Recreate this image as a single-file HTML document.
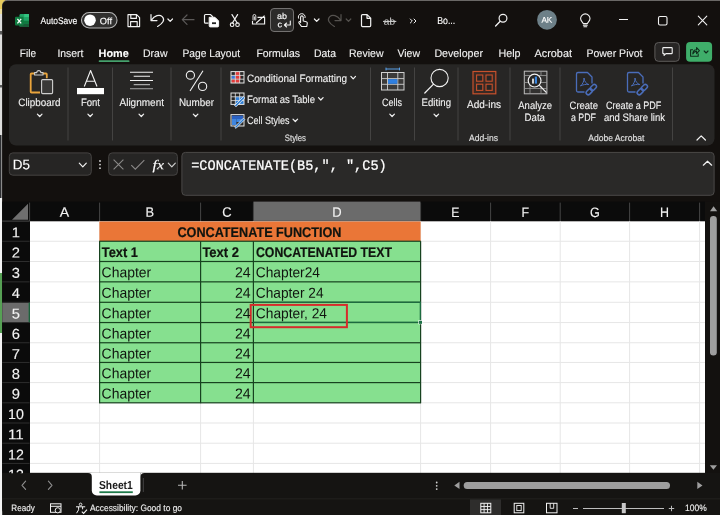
<!DOCTYPE html>
<html><head><meta charset="utf-8"><title>Excel</title>
<style>
*{box-sizing:border-box;margin:0;padding:0}
html,body{width:720px;height:515px;overflow:hidden;background:#13100e;font-family:"Liberation Sans",sans-serif}
#app{position:absolute;left:0;top:0;width:720px;height:515px;overflow:hidden;background:#e6e3df}
.a{position:absolute}
.x{position:absolute;white-space:nowrap;transform-origin:0 0}
svg{position:absolute;left:0;top:0}
</style></head><body><div id="app">
<svg width="720" height="515" viewBox="0 0 720 515">
<rect x="0.00" y="0.00" width="6.00" height="14.00" fill="#e6ca5c"/>
<rect x="0.00" y="9.00" width="3.00" height="8.00" fill="#ecdc9c"/>
<rect x="0.00" y="14.00" width="3.00" height="121.00" fill="#dedddc"/>
<rect x="0.00" y="31.00" width="2.00" height="3.50" fill="#5a5a5a"/>
<rect x="0.00" y="85.00" width="2.00" height="2.50" fill="#5a5a5a"/>
<rect x="0.00" y="135.00" width="3.00" height="63.00" fill="#17181c"/>
<rect x="0.80" y="135.00" width="1.20" height="63.00" fill="#8a8a8a"/>
<rect x="0.00" y="198.00" width="3.00" height="75.00" fill="#f4f4f4"/>
<rect x="0.00" y="273.00" width="3.00" height="60.00" fill="#56a054"/>
<rect x="0.00" y="333.00" width="3.00" height="182.00" fill="#f4f4f4"/>
<path d="M7.2 0 H722.2 A0 0 0 0 1 722.2 0 V515 A0 0 0 0 1 722.2 515 H8.2 A6 6 0 0 1 2.2 509 V5 A5 5 0 0 1 7.2 0z" fill="#6a6866"/>
<path d="M7.2 1 H722.2 A0 0 0 0 1 722.2 1 V515 A0 0 0 0 1 722.2 515 H8.2 A6 6 0 0 1 2.2 509 V6 A5 5 0 0 1 7.2 1z" fill="#13100e"/>
<rect x="9.00" y="64.20" width="705.50" height="81.40" rx="7" fill="#272625"/>
<rect x="67.50" y="67.50" width="1.00" height="73.00" fill="#444342"/>
<rect x="112.00" y="67.50" width="1.00" height="73.00" fill="#444342"/>
<rect x="170.50" y="67.50" width="1.00" height="73.00" fill="#444342"/>
<rect x="220.50" y="67.50" width="1.00" height="73.00" fill="#444342"/>
<rect x="370.00" y="67.50" width="1.00" height="73.00" fill="#444342"/>
<rect x="414.00" y="67.50" width="1.00" height="73.00" fill="#444342"/>
<rect x="457.50" y="67.50" width="1.00" height="73.00" fill="#444342"/>
<rect x="509.50" y="67.50" width="1.00" height="73.00" fill="#444342"/>
<rect x="559.50" y="67.50" width="1.00" height="73.00" fill="#444342"/>
<rect x="672.00" y="67.50" width="1.00" height="73.00" fill="#444342"/>
<rect x="98.70" y="60.20" width="30.80" height="1.90" rx="0.9" fill="#45a06c"/>
<rect x="654.90" y="42.60" width="24.40" height="18.70" rx="3.50" fill="#272524" stroke="#5e5c5b" stroke-width="1"/>
<rect x="686.10" y="42.10" width="26.00" height="19.70" rx="4" fill="#3fae6a"/>
<rect x="270.50" y="8.50" width="23.00" height="23.00" rx="3.50" fill="#2c2b2a" stroke="#737170" stroke-width="1"/>
<rect x="9.30" y="152.90" width="82.00" height="22.30" rx="3.50" fill="#262524" stroke="#454342" stroke-width="1"/>
<rect x="108.70" y="152.90" width="68.70" height="22.30" rx="3.50" fill="#262524" stroke="#454342" stroke-width="1"/>
<rect x="181.90" y="152.40" width="532.20" height="42.90" rx="3.50" fill="#2a2928" stroke="#4b4948" stroke-width="1"/>
<rect x="2.20" y="201.60" width="702.80" height="19.80" fill="#0b0b0b"/>
<rect x="2.20" y="221.00" width="27.80" height="252.00" fill="#0b0b0b"/>
<rect x="253.40" y="201.60" width="167.00" height="19.30" fill="#6b6b6b"/>
<rect x="2.20" y="302.70" width="27.00" height="19.59" fill="#6b6b6b"/>
<rect x="28.60" y="302.20" width="1.20" height="20.59" fill="#1e7145"/>
<rect x="29.10" y="202.60" width="1.00" height="18.60" fill="#454545"/>
<rect x="99.10" y="202.60" width="1.00" height="18.60" fill="#454545"/>
<rect x="200.10" y="202.60" width="1.00" height="18.60" fill="#454545"/>
<rect x="252.90" y="202.60" width="1.00" height="18.60" fill="#454545"/>
<rect x="420.10" y="202.60" width="1.00" height="18.60" fill="#454545"/>
<rect x="490.10" y="202.60" width="1.00" height="18.60" fill="#454545"/>
<rect x="559.70" y="202.60" width="1.00" height="18.60" fill="#454545"/>
<rect x="629.10" y="202.60" width="1.00" height="18.60" fill="#454545"/>
<rect x="699.10" y="202.60" width="1.00" height="18.60" fill="#454545"/>
<rect x="2.20" y="240.75" width="27.40" height="1.00" fill="#2e2e2e"/>
<rect x="2.20" y="261.00" width="27.40" height="1.00" fill="#2e2e2e"/>
<rect x="2.20" y="281.35" width="27.40" height="1.00" fill="#2e2e2e"/>
<rect x="2.20" y="301.80" width="27.40" height="1.00" fill="#2e2e2e"/>
<rect x="2.20" y="322.05" width="27.40" height="1.00" fill="#2e2e2e"/>
<rect x="2.20" y="342.25" width="27.40" height="1.00" fill="#2e2e2e"/>
<rect x="2.20" y="361.95" width="27.40" height="1.00" fill="#2e2e2e"/>
<rect x="2.20" y="382.10" width="27.40" height="1.00" fill="#2e2e2e"/>
<rect x="2.20" y="402.30" width="27.40" height="1.00" fill="#2e2e2e"/>
<rect x="2.20" y="422.50" width="27.40" height="1.00" fill="#2e2e2e"/>
<rect x="2.20" y="442.70" width="27.40" height="1.00" fill="#2e2e2e"/>
<rect x="2.20" y="462.90" width="27.40" height="1.00" fill="#2e2e2e"/>
<rect x="2.20" y="220.60" width="27.40" height="1.00" fill="#4a4a4a"/>
<rect x="30.00" y="221.30" width="675.00" height="251.70" fill="#ffffff"/>
<rect x="99.10" y="221.30" width="1.00" height="251.70" fill="#e6e6e6"/>
<rect x="200.10" y="221.30" width="1.00" height="251.70" fill="#e6e6e6"/>
<rect x="252.90" y="221.30" width="1.00" height="251.70" fill="#e6e6e6"/>
<rect x="420.10" y="221.30" width="1.00" height="251.70" fill="#e6e6e6"/>
<rect x="490.10" y="221.30" width="1.00" height="251.70" fill="#e6e6e6"/>
<rect x="559.70" y="221.30" width="1.00" height="251.70" fill="#e6e6e6"/>
<rect x="629.10" y="221.30" width="1.00" height="251.70" fill="#e6e6e6"/>
<rect x="699.10" y="221.30" width="1.00" height="251.70" fill="#e6e6e6"/>
<rect x="30.00" y="240.75" width="675.00" height="1.00" fill="#e6e6e6"/>
<rect x="30.00" y="261.00" width="675.00" height="1.00" fill="#e6e6e6"/>
<rect x="30.00" y="281.35" width="675.00" height="1.00" fill="#e6e6e6"/>
<rect x="30.00" y="301.80" width="675.00" height="1.00" fill="#e6e6e6"/>
<rect x="30.00" y="322.05" width="675.00" height="1.00" fill="#e6e6e6"/>
<rect x="30.00" y="342.25" width="675.00" height="1.00" fill="#e6e6e6"/>
<rect x="30.00" y="361.95" width="675.00" height="1.00" fill="#e6e6e6"/>
<rect x="30.00" y="382.10" width="675.00" height="1.00" fill="#e6e6e6"/>
<rect x="30.00" y="402.30" width="675.00" height="1.00" fill="#e6e6e6"/>
<rect x="30.00" y="422.50" width="675.00" height="1.00" fill="#e6e6e6"/>
<rect x="30.00" y="442.70" width="675.00" height="1.00" fill="#e6e6e6"/>
<rect x="30.00" y="462.90" width="675.00" height="1.00" fill="#e6e6e6"/>
<rect x="99.40" y="221.50" width="321.20" height="19.65" fill="#ea7637"/>
<rect x="99.40" y="241.15" width="321.20" height="161.55" fill="#86e08f"/>
<rect x="99.20" y="240.65" width="321.60" height="1.20" fill="#17421f"/>
<rect x="99.20" y="260.90" width="321.60" height="1.20" fill="#17421f"/>
<rect x="99.20" y="281.25" width="321.60" height="1.20" fill="#17421f"/>
<rect x="99.20" y="301.70" width="321.60" height="1.20" fill="#17421f"/>
<rect x="99.20" y="321.95" width="321.60" height="1.20" fill="#17421f"/>
<rect x="99.20" y="342.15" width="321.60" height="1.20" fill="#17421f"/>
<rect x="99.20" y="361.85" width="321.60" height="1.20" fill="#17421f"/>
<rect x="99.20" y="382.00" width="321.60" height="1.20" fill="#17421f"/>
<rect x="99.20" y="402.20" width="321.60" height="1.20" fill="#17421f"/>
<rect x="99.00" y="241.15" width="1.20" height="162.05" fill="#17421f"/>
<rect x="200.00" y="241.15" width="1.20" height="162.05" fill="#17421f"/>
<rect x="252.80" y="241.15" width="1.20" height="162.05" fill="#17421f"/>
<rect x="420.00" y="241.15" width="1.20" height="162.05" fill="#17421f"/>
<rect x="253.00" y="301.60" width="168.00" height="1.20" fill="#1e7145"/>
<rect x="253.00" y="321.65" width="168.00" height="1.20" fill="#1e7145"/>
<rect x="419.70" y="302.20" width="1.20" height="20.19" fill="#1e7145"/>
<rect x="418.40" y="320.25" width="4.00" height="4.00" fill="#ffffff"/>
<rect x="419.00" y="320.85" width="3.00" height="3.00" fill="#1e7145"/>
<rect x="250.70" y="304.90" width="96.20" height="22.30" rx="0.00" fill="none" stroke="#d62b2b" stroke-width="2"/>
<rect x="705.00" y="201.60" width="15.00" height="271.40" fill="#13110f"/>
<rect x="710.00" y="216.00" width="6.80" height="139.50" rx="3.3" fill="#9e9e9e"/>
<rect x="2.20" y="472.80" width="718.00" height="26.20" fill="#151412"/>
<path d="M91.8 472.8 H140.4 A0 0 0 0 1 140.4 472.8 V490.5 A5 5 0 0 1 135.4 495.5 H96.8 A5 5 0 0 1 91.8 490.5 V472.8 A0 0 0 0 1 91.8 472.8z" fill="#ffffff"/>
<rect x="99.40" y="491.30" width="33.40" height="1.80" fill="#1f7a4a"/>
<rect x="142.80" y="478.00" width="1.00" height="14.00" fill="#444444"/>
<rect x="463.70" y="482.00" width="206.30" height="7.00" rx="3.5" fill="#9e9e9e"/>
<rect x="2.20" y="498.60" width="718.00" height="1.00" fill="#2b2a29"/>
<rect x="2.20" y="499.40" width="718.00" height="15.60" fill="#151412"/>
<rect x="470.00" y="499.40" width="31.00" height="15.60" fill="#2e2d2c"/>
<rect x="583.00" y="508.00" width="81.00" height="1.00" fill="#bdbdbd"/>
<rect x="621.80" y="503.00" width="4.00" height="10.20" fill="#c8c8c8"/>
</svg>
<svg width="720" height="515" viewBox="0 0 720 515">
<rect x="19.5" y="14" width="9.5" height="13" rx="1.2" fill="#21a366"/><rect x="19.5" y="20.5" width="9.5" height="3.3" fill="#107c41"/><path d="M19.5 23.8 h9.5 v2 a1.2 1.2 0 0 1 -1.2 1.2 h-7.1 a1.2 1.2 0 0 1 -1.2 -1.2z" fill="#185c37"/><rect x="24.2" y="14" width="4.8" height="3.3" fill="#33c481"/><rect x="24.2" y="17.2" width="4.8" height="3.3" fill="#21a366"/>
<rect x="15" y="16.8" width="8.6" height="8.6" rx="1" fill="#107c41"/><path d="M17.4 18.8 L21.2 23.4 M21.2 18.8 L17.4 23.4" stroke="#fff" stroke-width="1.3"/>
<rect x="81.5" y="12.5" width="35.5" height="15.5" rx="7.75" fill="#302f2e" stroke="#b4b4b4" stroke-width="1.1"/><circle cx="90" cy="20.2" r="5.8" fill="#fff"/>
<path d="M128 14.6 h8.6 l3 3 v9 h-11.6z M130.8 14.6 v3.8 h5.6 v-3.8 M130.6 26.6 v-5 h6.6 v5" fill="none" stroke="#f2f2f2" stroke-width="1.15" stroke-linejoin="round"/>
<path d="M151 14.6 V20.6 H157 M151.4 20.2 C154.5 15.5 159.5 14 162.2 16.6 C165.3 19.6 163 23.3 157.6 26.4" fill="none" stroke="#f2f2f2" stroke-width="1.2" stroke-linecap="round" stroke-linejoin="round"/>
<path d="M167.89999999999998 19.0 L170.2 21.4 L172.5 19.0" fill="none" stroke="#f2f2f2" stroke-width="1.2" stroke-linecap="round" stroke-linejoin="round"/>
<path d="M194 19.7 H182.5 M187 15 L182.3 19.7 L187 24.4" fill="none" stroke="#5c5a59" stroke-width="1.2" stroke-linecap="round" stroke-linejoin="round"/>
<path d="M208.5 23.2 h-3 a1 1 0 0 1 -1 -1 v-6.7 a1 1 0 0 1 1 -1 h5 l2.5 2.5" fill="none" stroke="#f2f2f2" stroke-width="1.2"/><path d="M209.2 17.3 h5.8 l3.6 3.6 v5 a1 1 0 0 1 -1 1 h-7.4 a1 1 0 0 1 -1 -1z" fill="#fff" stroke="#f2f2f2" stroke-width="1"/><rect x="212" y="22.3" width="4" height="1.8" fill="#222"/>
<path d="M232 14.6 L237.2 23 M237.6 14.6 L232.4 23" stroke="#f2f2f2" stroke-width="1.2" stroke-linecap="round"/><circle cx="232.1" cy="24.7" r="1.8" fill="none" stroke="#f2f2f2" stroke-width="1.1"/><circle cx="237.5" cy="24.7" r="1.8" fill="none" stroke="#f2f2f2" stroke-width="1.1"/>
<path d="M257.5 17.4 H264.6 V24 H252.5 V21 M256.2 23 L264.6 15.6" fill="none" stroke="#f2f2f2" stroke-width="1.15"/><path d="M253 20.5 v-4.6 a1.4 1.4 0 0 1 2.8 0 v3.6 a0.7 0.7 0 0 1 -1.4 0 v-3" fill="none" stroke="#f2f2f2" stroke-width="0.9"/>
<path d="M290.3 21 V25 H284.6 M286.6 23 L284.4 25 L286.6 27" fill="none" stroke="#f2f2f2" stroke-width="1.1" stroke-linecap="round" stroke-linejoin="round"/>
<path d="M300.6 22.5 V17.2 a1.3 1.3 0 0 1 2.6 0 V21 l3 .7 a1.4 1.4 0 0 1 1.1 1.5 l-.5 3.3 h-5.3 l-2.6 -3.6 a1 1 0 0 1 1.5 -1.2z" fill="none" stroke="#f2f2f2" stroke-width="1.1" stroke-linejoin="round"/><path d="M298.7 18.6 a3.4 3.4 0 1 1 6.3 -.6" fill="none" stroke="#f2f2f2" stroke-width="1"/>
<path d="M314.4 19.0 L316.7 21.4 L319.0 19.0" fill="none" stroke="#f2f2f2" stroke-width="1.2" stroke-linecap="round" stroke-linejoin="round"/>
<path d="M341 14.6 V20.6 H335 M340.6 20.2 C337.5 15.5 332.5 14 329.8 16.6 C326.7 19.6 329 23.3 334.4 26.4" fill="none" stroke="#55524f" stroke-width="1.2" stroke-linecap="round" stroke-linejoin="round"/>
<path d="M346.2 19.0 L348.5 21.4 L350.8 19.0" fill="none" stroke="#55524f" stroke-width="1.2" stroke-linecap="round" stroke-linejoin="round"/>
<path d="M362.5 14.6 h4.6 l3.6 3.6 v7.4 a1 1 0 0 1 -1 1 h-7.2 a1 1 0 0 1 -1 -1 v-10 a1 1 0 0 1 1 -1z M367 14.8 v3.5 h3.5" fill="none" stroke="#f2f2f2" stroke-width="1.2" stroke-linejoin="round"/>
<path d="M383 21.4 H396.3" stroke="#d8d8d8" stroke-width="1"/>
<path d="M410.3 19 L412.3 21 L410.3 23 M414 19 L416 21 L414 23" fill="none" stroke="#f2f2f2" stroke-width="1" stroke-linecap="round" stroke-linejoin="round"/>
<circle cx="503" cy="18.3" r="3.9" fill="none" stroke="#f2f2f2" stroke-width="1.2"/><path d="M500.2 21.2 L495.6 26" stroke="#f2f2f2" stroke-width="1.3" stroke-linecap="round"/>
<circle cx="547" cy="19.8" r="9.9" fill="#6d8088"/>
<path d="M583.2 23.6 c-.2 -1.3 -2.6 -2.2 -2.6 -5 a4.7 4.7 0 0 1 9.4 0 c0 2.8 -2.4 3.7 -2.6 5z M583.4 25.3 h3.8 M583.9 26.8 h2.8" fill="none" stroke="#f2f2f2" stroke-width="1.1" stroke-linecap="round" stroke-linejoin="round"/>
<path d="M619 19.5 H628" stroke="#f2f2f2" stroke-width="1"/><rect x="658.5" y="16.5" width="8.5" height="8.5" rx="1.5" fill="none" stroke="#f2f2f2" stroke-width="1.1"/><path d="M698.3 16.2 L706.8 24.8 M706.8 16.2 L698.3 24.8" stroke="#f2f2f2" stroke-width="1.1" stroke-linecap="round"/>
<path d="M663.5 47.6 h8 a.7 .7 0 0 1 .7 .7 v4.6 a.7 .7 0 0 1 -.7 .7 h-5.6 l-1.8 1.8 v-1.8 h-.6 a.7 .7 0 0 1 -.7 -.7 v-4.6 a.7 .7 0 0 1 .7 -.7z" fill="none" stroke="#f2f2f2" stroke-width="1.1" stroke-linejoin="round"/>
<path d="M693 49.8 h-2.4 v6.4 h7.6 v-2.6 M692.8 54 c0 -2.6 1.4 -4.2 3.8 -4.2 v-2.2 l2.8 3 l-2.8 3 v-2.2 c-1.8 0 -3 .8 -3.8 2.6z" fill="none" stroke="#0f2e1c" stroke-width="1.1" stroke-linejoin="round"/>
<path d="M704.2 51.0 L706.1 53.0 L708.0 51.0" fill="none" stroke="#0f2e1c" stroke-width="1.1" stroke-linecap="round" stroke-linejoin="round"/>
<path d="M34.5 73.5 h-3 a.8 .8 0 0 0 -.8 .8 v17.4 a.8 .8 0 0 0 .8 .8 h8.5 M43 73.5 h3 a.8 .8 0 0 1 .8 .8 v4" fill="none" stroke="#e9a43c" stroke-width="1.8"/><path d="M34.6 75 v-2.4 h2.2 a2 2 0 0 1 4 0 h2.2 v2.4z" fill="none" stroke="#cfcfcf" stroke-width="1.1" stroke-linejoin="round"/><rect x="41.6" y="79.6" width="11" height="14" rx="1" fill="#3a3938" stroke="#cfcfcf" stroke-width="1.1"/>
<path d="M37.400000000000006 114.1 L39.7 116.5 L42.0 114.1" fill="none" stroke="#f2f2f2" stroke-width="1.2" stroke-linecap="round" stroke-linejoin="round"/>
<path d="M84.3 86.5 L90.6 70.5 L97 86.5 M86.5 81.3 H94.8" fill="none" stroke="#f2f2f2" stroke-width="1.1" stroke-linejoin="round"/><rect x="77" y="88" width="27" height="6.2" fill="#fff"/>
<path d="M87.9 114.1 L90.2 116.5 L92.5 114.1" fill="none" stroke="#f2f2f2" stroke-width="1.2" stroke-linecap="round" stroke-linejoin="round"/>
<path d="M130 72.2 H153 M133.7 76.3 H150 M130 80.5 H153" stroke="#f2f2f2" stroke-width="1.1"/><path d="M133.7 84.6 H150 M130 88.8 H153" stroke="#a9a9a9" stroke-width="1.1"/>
<path d="M139.0 114.1 L141.3 116.5 L143.60000000000002 114.1" fill="none" stroke="#f2f2f2" stroke-width="1.2" stroke-linecap="round" stroke-linejoin="round"/>
<circle cx="190.4" cy="75.2" r="4.1" fill="none" stroke="#f2f2f2" stroke-width="1.1"/><circle cx="202.6" cy="86.4" r="4.1" fill="none" stroke="#f2f2f2" stroke-width="1.1"/><path d="M203 70.8 L190 91" stroke="#f2f2f2" stroke-width="1.1"/>
<path d="M193.29999999999998 114.1 L195.6 116.5 L197.9 114.1" fill="none" stroke="#f2f2f2" stroke-width="1.2" stroke-linecap="round" stroke-linejoin="round"/>
<rect x="231" y="71.6" width="13" height="11.4" fill="#2a2928"/><rect x="235" y="72" width="5" height="3.4" fill="#e23b3b"/><rect x="231.4" y="75.6" width="4" height="3.4" fill="#3c78d8"/><rect x="235.6" y="75.6" width="5" height="3.4" fill="#e23b3b"/><rect x="231.4" y="79.4" width="8.6" height="3.4" fill="#e23b3b"/><rect x="231" y="71.6" width="13" height="11.4" fill="none" stroke="#e4e4e4" stroke-width="1"/><path d="M235.33333333333334 71.6 v11.4 M239.66666666666666 71.6 v11.4 M231 75.39999999999999 h13 M231 79.19999999999999 h13" stroke="#e4e4e4" stroke-width=".8" fill="none"/>
<path d="M350.9 76.39999999999999 L353.2 78.8 L355.5 76.39999999999999" fill="none" stroke="#f2f2f2" stroke-width="1.2" stroke-linecap="round" stroke-linejoin="round"/>
<rect x="235.4" y="96.8" width="8.600" height="7.600" fill="#2f7fd6"/><rect x="231" y="93" width="13" height="11.4" fill="none" stroke="#e4e4e4" stroke-width="1"/><path d="M235.33333333333334 93 v11.4 M239.66666666666666 93 v11.4 M231 96.8 h13 M231 100.6 h13" stroke="#e4e4e4" stroke-width=".8" fill="none"/><path d="M234.6 105.400 L243.400 96.600 L244.800 98 L236 106.800z" fill="#2f7fd6" stroke="#f0f0f0" stroke-width=".8"/>
<path d="M318.5 97.6 L320.8 100.0 L323.1 97.6" fill="none" stroke="#f2f2f2" stroke-width="1.2" stroke-linecap="round" stroke-linejoin="round"/>
<rect x="231" y="114.600" width="13" height="11.400" fill="#2a2928" stroke="#e4e4e4" stroke-width="1"/><rect x="232" y="115.600" width="11" height="3.400" fill="#2b62c4"/><rect x="232" y="119" width="4.400" height="6" fill="#3f86e0"/><rect x="236.400" y="119" width="6.600" height="3" fill="#3f86e0"/><path d="M234.600 127 L243.400 118.200 L244.800 119.600 L236 128.400z" fill="#2f7fd6" stroke="#f0f0f0" stroke-width=".8"/>
<path d="M293.0 119.1 L295.3 121.5 L297.6 119.1" fill="none" stroke="#f2f2f2" stroke-width="1.2" stroke-linecap="round" stroke-linejoin="round"/>
<path d="M386 69 H399.5 M386 67.6 v2.8 M399.5 67.6 v2.8" stroke="#5aa0e8" stroke-width="1"/><rect x="381.5" y="72.5" width="22.5" height="17.5" fill="#3b3a39" stroke="#d0d0d0" stroke-width="1"/><path d="M387.5 72.5 v17.5 M397.8 72.5 v17.5 M381.5 78.6 h22.5 M381.5 84.3 h22.5" stroke="#d0d0d0" stroke-width=".9"/><rect x="388" y="79.1" width="9.3" height="4.7" fill="#2f7fe0"/>
<path d="M389.8 114.1 L392.1 116.5 L394.40000000000003 114.1" fill="none" stroke="#f2f2f2" stroke-width="1.2" stroke-linecap="round" stroke-linejoin="round"/>
<circle cx="439.6" cy="78" r="8.6" fill="none" stroke="#f2f2f2" stroke-width="1.1"/><path d="M433.5 84.2 L424.8 93" stroke="#f2f2f2" stroke-width="1.2" stroke-linecap="round"/>
<path d="M434.0 114.1 L436.3 116.5 L438.6 114.1" fill="none" stroke="#f2f2f2" stroke-width="1.2" stroke-linecap="round" stroke-linejoin="round"/>
<rect x="473" y="71.5" width="22.8" height="22.3" fill="#3a2a24" stroke="#c7512c" stroke-width="1.2"/><rect x="476.6" y="75" width="6.2" height="6.2" fill="#272625" stroke="#c7512c" stroke-width="1.1"/><rect x="486" y="75" width="6.2" height="6.2" fill="#272625" stroke="#c7512c" stroke-width="1.1"/><rect x="476.6" y="84.2" width="6.2" height="6.2" fill="#272625" stroke="#c7512c" stroke-width="1.1"/><rect x="486" y="84.2" width="6.2" height="6.2" fill="#272625" stroke="#c7512c" stroke-width="1.1"/>
<rect x="524.3" y="71.2" width="22.6" height="22.6" fill="#323130" stroke="#bdbdbd" stroke-width="1"/><path d="M524.3 75.5 h22.6 M524.3 82.5 h22.6 M524.3 88.5 h22.6 M530 82.5 v11.3 M541 71.2 v4.3 M541 86 v7.8" stroke="#9a9a9a" stroke-width=".8"/><circle cx="534.6" cy="80.6" r="6.4" fill="#272625" stroke="#f2f2f2" stroke-width="1.2"/><rect x="532" y="78.6" width="2" height="5" fill="#d0d0d0"/><rect x="534.8" y="76.6" width="2.2" height="7" fill="#3a86e0"/><path d="M539.4 85.4 L546.5 92.6" stroke="#f2f2f2" stroke-width="1.3"/>
<path d="M584.5 92 H578 a1.500 1.500 0 0 1 -1.500 -1.500 V74 a1.500 1.500 0 0 1 1.500 -1.500 H587.5 L592 77 V83.5" fill="none" stroke="#4a6dba" stroke-width="1.3" stroke-linejoin="round"/><path d="M580.4 86 C582.6 84.400 584.4 80.600 584 78 C584.3 81.500 586.4 84 588.8 84.500 C586 84 582.6 84.800 580.4 86z" fill="none" stroke="#4a6dba" stroke-width="1" stroke-linejoin="round"/><g transform="rotate(-45 591.3 89.6)"><rect x="584.9" y="87.5" width="7" height="4.200" rx="2.100" fill="none" stroke="#4a6dba" stroke-width="1.500"/><rect x="590.6999999999999" y="87.5" width="7" height="4.200" rx="2.100" fill="none" stroke="#4a6dba" stroke-width="1.500"/></g>
<path d="M635.5 92 H629 a1.500 1.500 0 0 1 -1.500 -1.500 V74 a1.500 1.500 0 0 1 1.500 -1.500 H638.5 L643 77 V83.5" fill="none" stroke="#4a6dba" stroke-width="1.3" stroke-linejoin="round"/><path d="M631.4 86 C633.6 84.400 635.4 80.600 635 78 C635.3 81.500 637.4 84 639.8 84.500 C637 84 633.6 84.800 631.4 86z" fill="none" stroke="#4a6dba" stroke-width="1" stroke-linejoin="round"/><g transform="rotate(-45 642.3 89.6)"><rect x="635.9" y="87.5" width="7" height="4.200" rx="2.100" fill="none" stroke="#4a6dba" stroke-width="1.500"/><rect x="641.6999999999999" y="87.5" width="7" height="4.200" rx="2.100" fill="none" stroke="#4a6dba" stroke-width="1.500"/></g>
<path d="M697 140 L701.2 135.8 L705.4 140" fill="none" stroke="#f2f2f2" stroke-width="1.2" stroke-linecap="round" stroke-linejoin="round"/>
<path d="M79.3 163.2 L82.8 166.8 L86.3 163.2" fill="none" stroke="#f2f2f2" stroke-width="1.2" stroke-linecap="round" stroke-linejoin="round"/>
<circle cx="100" cy="161" r=".9" fill="#d8d8d8"/><circle cx="100" cy="164.6" r=".9" fill="#d8d8d8"/><circle cx="100" cy="168.2" r=".9" fill="#d8d8d8"/>
<path d="M113.6 159.6 L123.4 169.4 M123.4 159.600 L113.600 169.4" stroke="#8a8887" stroke-width="1.1"/><path d="M131.3 165.2 L135.300 169.2 L144.3 160.2" fill="none" stroke="#8a8887" stroke-width="1.1"/>
<path d="M168.3 163.2 L171.8 166.8 L175.3 163.2" fill="none" stroke="#cfcfcf" stroke-width="1.2" stroke-linecap="round" stroke-linejoin="round"/>
<path d="M703.300 165.2 L707.5 161.200 L711.7 165.2" fill="none" stroke="#f2f2f2" stroke-width="1.200" stroke-linecap="round" stroke-linejoin="round"/>
<path d="M28 203.800 V219.700 H12z" fill="#6f6f6f"/>
<path d="M710 211.300 L713.6 206.2 L717.200 211.300z" fill="#9e9e9e"/><path d="M709.8 465.300 L717 465.300 L713.4 469.8z" fill="#9e9e9e"/>
<path d="M25.600 481.200 L22 485.300 L25.600 489.4 M48.400 481.200 L52 485.300 L48.400 489.4" fill="none" stroke="#8f8f8f" stroke-width="1.100" stroke-linecap="round" stroke-linejoin="round"/>
<path d="M178 485.300 H186.600 M182.300 481 V489.600" stroke="#b5b5b5" stroke-width="1.100"/>
<path d="M88 473 H92 V477 A4 4 0 0 0 88 473z M144.500 473 H140.500 V477 A4 4 0 0 1 144.500 473z" fill="#fff"/>
<circle cx="436.700" cy="482.500" r=".9" fill="#cfcfcf"/><circle cx="436.700" cy="485.800" r=".9" fill="#cfcfcf"/><circle cx="436.700" cy="489.100" r=".9" fill="#cfcfcf"/>
<path d="M459.500 481.800 V489 L454.300 485.400z M697.300 481.800 V489 L702.500 485.400z" fill="#9e9e9e"/>
<rect x="50.500" y="503.800" width="10.500" height="8.500" fill="none" stroke="#f2f2f2" stroke-width="1"/><path d="M50.500 506.300 h10.500" stroke="#f2f2f2" stroke-width="1"/><circle cx="57.800" cy="510.300" r="2.600" fill="#151412" stroke="#f2f2f2" stroke-width="1"/>
<circle cx="80.600" cy="504.400" r="1.300" fill="none" stroke="#f2f2f2" stroke-width=".9"/><path d="M76 506.800 h9.200 M78.600 506.800 v3 l-2 3.400 M82.600 506.800 v2.500" fill="none" stroke="#f2f2f2" stroke-width="1"/><path d="M81.800 511.600 l1.800 1.800 l3.400 -3.800" fill="none" stroke="#f2f2f2" stroke-width="1.100"/>
<rect x="480.800" y="503.300" width="10" height="9.500" fill="none" stroke="#f2f2f2" stroke-width="1"/><path d="M484.100 503.300 v9.500 M487.500 503.300 v9.500 M480.800 506.500 h10 M480.800 509.600 h10" stroke="#f2f2f2" stroke-width=".9"/>
<rect x="514.200" y="503.300" width="9.600" height="9.500" fill="none" stroke="#f2f2f2" stroke-width="1"/><rect x="516.800" y="505.500" width="4.400" height="5.100" fill="none" stroke="#f2f2f2" stroke-width=".9"/>
<rect x="546.500" y="503.300" width="10.500" height="9.500" fill="none" stroke="#f2f2f2" stroke-width="1"/><path d="M550.200 503.300 v5 h3.500 v-5" fill="none" stroke="#f2f2f2" stroke-width=".9"/>
<path d="M573 508.500 H578 M668.800 508.500 H674.200 M671.500 505.800 V511.200" stroke="#bdbdbd" stroke-width="1"/>
</svg>
<div class="a" style="left:0;top:0;width:720px;height:515px;will-change:transform"><div class="x" style="left:40px;top:16px;font-size:9.6px;line-height:9.6px;color:#fff;font-family:'Liberation Sans',sans-serif;-webkit-text-stroke:0.12px #fff;transform:translate(0.60px,0.37px) rotate(0.03deg) scaleX(0.8796);">AutoSave</div>
<div class="x" style="left:99px;top:16px;font-size:9.4px;line-height:9.4px;color:#fff;font-family:'Liberation Sans',sans-serif;-webkit-text-stroke:0.12px #fff;transform:translate(0.80px,0.24px) rotate(0.03deg) scaleX(0.9884);">Off</div>
<div class="x" style="left:277px;top:11px;font-size:8.6px;line-height:8.6px;color:#fff;font-family:'Liberation Sans',sans-serif;-webkit-text-stroke:0.12px #fff;transform:translate(0.00px,0.92px) rotate(0.03deg) scaleX(1.0458);">ab</div>
<div class="x" style="left:277px;top:20px;font-size:8.6px;line-height:8.6px;color:#fff;font-family:'Liberation Sans',sans-serif;-webkit-text-stroke:0.12px #fff;transform:translate(0.40px,0.22px) rotate(0.03deg) scaleX(1.0705);">c</div>
<div class="x" style="left:383px;top:16px;font-size:10px;line-height:10px;color:#d8d8d8;font-family:'Liberation Sans',sans-serif;transform:translate(0.80px,0.73px) rotate(0.03deg) scaleX(1.0067);">ab</div>
<div class="x" style="left:437px;top:15px;font-size:10.2px;line-height:10.2px;color:#fff;font-family:'Liberation Sans',sans-serif;-webkit-text-stroke:0.12px #fff;transform:translate(0.20px,0.87px) rotate(0.03deg) scaleX(0.8591);">Bo...</div>
<div class="x" style="left:541px;top:16px;font-size:8.2px;line-height:8.2px;color:#fff;font-family:'Liberation Sans',sans-serif;-webkit-text-stroke:0.12px #fff;transform:translate(0.40px,0.86px) rotate(0.03deg) scaleX(0.9966);">AK</div>
<div class="x" style="left:19px;top:48px;font-size:11px;line-height:11px;color:#f0f0f0;font-family:'Liberation Sans',sans-serif;-webkit-text-stroke:0.12px #f0f0f0;transform:translate(0.80px,0.09px) rotate(0.03deg) scaleX(0.9135);">File</div>
<div class="x" style="left:57px;top:48px;font-size:11px;line-height:11px;color:#f0f0f0;font-family:'Liberation Sans',sans-serif;-webkit-text-stroke:0.12px #f0f0f0;transform:translate(0.40px,0.09px) rotate(0.03deg) scaleX(0.9486);">Insert</div>
<div class="x" style="left:143px;top:48px;font-size:11px;line-height:11px;color:#f0f0f0;font-family:'Liberation Sans',sans-serif;-webkit-text-stroke:0.12px #f0f0f0;transform:translate(0.00px,0.09px) rotate(0.03deg) scaleX(0.9544);">Draw</div>
<div class="x" style="left:182px;top:48px;font-size:11px;line-height:11px;color:#f0f0f0;font-family:'Liberation Sans',sans-serif;-webkit-text-stroke:0.12px #f0f0f0;transform:translate(0.40px,0.09px) rotate(0.03deg) scaleX(0.9323);">Page Layout</div>
<div class="x" style="left:256px;top:48px;font-size:11px;line-height:11px;color:#f0f0f0;font-family:'Liberation Sans',sans-serif;-webkit-text-stroke:0.12px #f0f0f0;transform:translate(0.40px,0.09px) rotate(0.03deg) scaleX(0.9511);">Formulas</div>
<div class="x" style="left:313px;top:48px;font-size:11px;line-height:11px;color:#f0f0f0;font-family:'Liberation Sans',sans-serif;-webkit-text-stroke:0.12px #f0f0f0;transform:translate(0.90px,0.09px) rotate(0.03deg) scaleX(0.9505);">Data</div>
<div class="x" style="left:349px;top:48px;font-size:11px;line-height:11px;color:#f0f0f0;font-family:'Liberation Sans',sans-serif;-webkit-text-stroke:0.12px #f0f0f0;transform:translate(0.00px,0.09px) rotate(0.03deg) scaleX(0.9563);">Review</div>
<div class="x" style="left:397px;top:48px;font-size:11px;line-height:11px;color:#f0f0f0;font-family:'Liberation Sans',sans-serif;-webkit-text-stroke:0.12px #f0f0f0;transform:translate(0.50px,0.09px) rotate(0.03deg) scaleX(0.9511);">View</div>
<div class="x" style="left:434px;top:48px;font-size:11px;line-height:11px;color:#f0f0f0;font-family:'Liberation Sans',sans-serif;-webkit-text-stroke:0.12px #f0f0f0;transform:translate(0.40px,0.09px) rotate(0.03deg) scaleX(0.9693);">Developer</div>
<div class="x" style="left:498px;top:48px;font-size:11px;line-height:11px;color:#f0f0f0;font-family:'Liberation Sans',sans-serif;-webkit-text-stroke:0.12px #f0f0f0;transform:translate(0.40px,0.09px) rotate(0.03deg) scaleX(0.9768);">Help</div>
<div class="x" style="left:534px;top:48px;font-size:11px;line-height:11px;color:#f0f0f0;font-family:'Liberation Sans',sans-serif;-webkit-text-stroke:0.12px #f0f0f0;transform:translate(0.50px,0.09px) rotate(0.03deg) scaleX(0.9889);">Acrobat</div>
<div class="x" style="left:586px;top:48px;font-size:11px;line-height:11px;color:#f0f0f0;font-family:'Liberation Sans',sans-serif;-webkit-text-stroke:0.12px #f0f0f0;transform:translate(0.40px,0.09px) rotate(0.03deg) scaleX(0.9557);">Power Pivot</div>
<div class="x" style="left:98px;top:48px;font-size:11px;line-height:11px;color:#fff;font-family:'Liberation Sans',sans-serif;font-weight:bold;-webkit-text-stroke:0.12px #fff;transform:translate(0.60px,0.09px) rotate(0.03deg) scaleX(0.9881);">Home</div>
<div class="x" style="left:18px;top:97px;font-size:10.8px;line-height:10.8px;color:#f1f1f1;font-family:'Liberation Sans',sans-serif;-webkit-text-stroke:0.12px #f1f1f1;transform:translate(0.30px,0.26px) rotate(0.03deg) scaleX(0.9130);">Clipboard</div>
<div class="x" style="left:80px;top:97px;font-size:10.8px;line-height:10.8px;color:#f1f1f1;font-family:'Liberation Sans',sans-serif;-webkit-text-stroke:0.12px #f1f1f1;transform:translate(0.90px,0.26px) rotate(0.03deg) scaleX(0.8839);">Font</div>
<div class="x" style="left:119px;top:97px;font-size:10.8px;line-height:10.8px;color:#f1f1f1;font-family:'Liberation Sans',sans-serif;-webkit-text-stroke:0.12px #f1f1f1;transform:translate(0.50px,0.26px) rotate(0.03deg) scaleX(0.9268);">Alignment</div>
<div class="x" style="left:178px;top:97px;font-size:10.8px;line-height:10.8px;color:#f1f1f1;font-family:'Liberation Sans',sans-serif;-webkit-text-stroke:0.12px #f1f1f1;transform:translate(0.90px,0.26px) rotate(0.03deg) scaleX(0.9139);">Number</div>
<div class="x" style="left:247px;top:72px;font-size:10.8px;line-height:10.8px;color:#f1f1f1;font-family:'Liberation Sans',sans-serif;-webkit-text-stroke:0.12px #f1f1f1;transform:translate(0.00px,0.66px) rotate(0.03deg) scaleX(0.9206);">Conditional Formatting</div>
<div class="x" style="left:247px;top:93px;font-size:10.8px;line-height:10.8px;color:#f1f1f1;font-family:'Liberation Sans',sans-serif;-webkit-text-stroke:0.12px #f1f1f1;transform:translate(0.00px,0.96px) rotate(0.03deg) scaleX(0.8806);">Format as Table</div>
<div class="x" style="left:247px;top:115px;font-size:10.8px;line-height:10.8px;color:#f1f1f1;font-family:'Liberation Sans',sans-serif;-webkit-text-stroke:0.12px #f1f1f1;transform:translate(0.00px,0.46px) rotate(0.03deg) scaleX(0.8331);">Cell Styles</div>
<div class="x" style="left:382px;top:97px;font-size:10.8px;line-height:10.8px;color:#f1f1f1;font-family:'Liberation Sans',sans-serif;-webkit-text-stroke:0.12px #f1f1f1;transform:translate(0.00px,0.26px) rotate(0.03deg) scaleX(0.8333);">Cells</div>
<div class="x" style="left:421px;top:97px;font-size:10.8px;line-height:10.8px;color:#f1f1f1;font-family:'Liberation Sans',sans-serif;-webkit-text-stroke:0.12px #f1f1f1;transform:translate(0.60px,0.26px) rotate(0.03deg) scaleX(0.8905);">Editing</div>
<div class="x" style="left:467px;top:99px;font-size:10.8px;line-height:10.8px;color:#f1f1f1;font-family:'Liberation Sans',sans-serif;-webkit-text-stroke:0.12px #f1f1f1;transform:translate(0.00px,0.46px) rotate(0.03deg) scaleX(0.9287);">Add-ins</div>
<div class="x" style="left:518px;top:99px;font-size:10.8px;line-height:10.8px;color:#f1f1f1;font-family:'Liberation Sans',sans-serif;-webkit-text-stroke:0.12px #f1f1f1;transform:translate(0.30px,0.76px) rotate(0.03deg) scaleX(0.8771);">Analyze</div>
<div class="x" style="left:524px;top:111px;font-size:10.8px;line-height:10.8px;color:#f1f1f1;font-family:'Liberation Sans',sans-serif;-webkit-text-stroke:0.12px #f1f1f1;transform:translate(0.60px,0.96px) rotate(0.03deg) scaleX(0.8942);">Data</div>
<div class="x" style="left:569px;top:99px;font-size:10.8px;line-height:10.8px;color:#f1f1f1;font-family:'Liberation Sans',sans-serif;-webkit-text-stroke:0.12px #f1f1f1;transform:translate(0.60px,0.76px) rotate(0.03deg) scaleX(0.8760);">Create</div>
<div class="x" style="left:571px;top:111px;font-size:10.8px;line-height:10.8px;color:#f1f1f1;font-family:'Liberation Sans',sans-serif;-webkit-text-stroke:0.12px #f1f1f1;transform:translate(0.00px,0.96px) rotate(0.03deg) scaleX(0.8167);">a PDF</div>
<div class="x" style="left:606px;top:99px;font-size:10.8px;line-height:10.8px;color:#f1f1f1;font-family:'Liberation Sans',sans-serif;-webkit-text-stroke:0.12px #f1f1f1;transform:translate(0.00px,0.76px) rotate(0.03deg) scaleX(0.8392);">Create a PDF</div>
<div class="x" style="left:604px;top:111px;font-size:10.8px;line-height:10.8px;color:#f1f1f1;font-family:'Liberation Sans',sans-serif;-webkit-text-stroke:0.12px #f1f1f1;transform:translate(0.00px,0.96px) rotate(0.03deg) scaleX(0.8837);">and Share link</div>
<div class="x" style="left:284px;top:134px;font-size:9.2px;line-height:9.2px;color:#e4e4e4;font-family:'Liberation Sans',sans-serif;-webkit-text-stroke:0.12px #e4e4e4;transform:translate(0.80px,0.41px) rotate(0.03deg) scaleX(0.8469);">Styles</div>
<div class="x" style="left:469px;top:134px;font-size:9.2px;line-height:9.2px;color:#e4e4e4;font-family:'Liberation Sans',sans-serif;-webkit-text-stroke:0.12px #e4e4e4;transform:translate(0.00px,0.41px) rotate(0.03deg) scaleX(0.9308);">Add-ins</div>
<div class="x" style="left:588px;top:134px;font-size:9.2px;line-height:9.2px;color:#e4e4e4;font-family:'Liberation Sans',sans-serif;-webkit-text-stroke:0.12px #e4e4e4;transform:translate(0.20px,0.41px) rotate(0.03deg) scaleX(0.9306);">Adobe Acrobat</div>
<div class="x" style="left:12px;top:158px;font-size:13.8px;line-height:13.8px;color:#fff;font-family:'Liberation Sans',sans-serif;-webkit-text-stroke:0.12px #fff;transform:translate(0.80px,0.32px) rotate(0.03deg) scaleX(0.9750);">D5</div>
<div class="x" style="left:152px;top:158px;font-size:13.5px;line-height:13.5px;color:#fff;font-family:'Liberation Serif',serif;font-style:italic;-webkit-text-stroke:0.12px #fff;transform:translate(0.50px,0.29px) rotate(0.03deg) scaleX(1.1795);">fx</div>
<div class="x" style="left:191px;top:158px;font-size:14.2px;line-height:14.2px;color:#fff;font-family:'Liberation Mono',monospace;-webkit-text-stroke:0.25px #fff;transform:translate(0.20px,0.72px) rotate(0.03deg) scaleX(0.9567);">=CONCATENATE(B5,", ",C5)</div>
<div class="x" style="left:59px;top:205px;font-size:13.6px;line-height:13.6px;color:#f3f3f3;font-family:'Liberation Sans',sans-serif;-webkit-text-stroke:0.12px #f3f3f3;transform:translate(0.70px,0.69px) rotate(0.03deg) scaleX(1.0355);">A</div>
<div class="x" style="left:145px;top:205px;font-size:13.6px;line-height:13.6px;color:#f3f3f3;font-family:'Liberation Sans',sans-serif;-webkit-text-stroke:0.12px #f3f3f3;transform:translate(0.60px,0.69px) rotate(0.03deg) scaleX(0.9473);">B</div>
<div class="x" style="left:222px;top:205px;font-size:13.6px;line-height:13.6px;color:#f3f3f3;font-family:'Liberation Sans',sans-serif;-webkit-text-stroke:0.12px #f3f3f3;transform:translate(0.20px,0.69px) rotate(0.03deg) scaleX(0.9564);">C</div>
<div class="x" style="left:332px;top:205px;font-size:13.6px;line-height:13.6px;color:#f3f3f3;font-family:'Liberation Sans',sans-serif;-webkit-text-stroke:0.12px #f3f3f3;transform:translate(0.20px,0.69px) rotate(0.03deg) scaleX(0.9564);">D</div>
<div class="x" style="left:451px;top:205px;font-size:13.6px;line-height:13.6px;color:#f3f3f3;font-family:'Liberation Sans',sans-serif;-webkit-text-stroke:0.12px #f3f3f3;transform:translate(0.30px,0.69px) rotate(0.03deg) scaleX(0.9033);">E</div>
<div class="x" style="left:521px;top:205px;font-size:13.6px;line-height:13.6px;color:#f3f3f3;font-family:'Liberation Sans',sans-serif;-webkit-text-stroke:0.12px #f3f3f3;transform:translate(0.60px,0.69px) rotate(0.03deg) scaleX(0.9143);">F</div>
<div class="x" style="left:590px;top:205px;font-size:13.6px;line-height:13.6px;color:#f3f3f3;font-family:'Liberation Sans',sans-serif;-webkit-text-stroke:0.12px #f3f3f3;transform:translate(0.00px,0.69px) rotate(0.03deg) scaleX(0.9264);">G</div>
<div class="x" style="left:659px;top:205px;font-size:13.6px;line-height:13.6px;color:#f3f3f3;font-family:'Liberation Sans',sans-serif;-webkit-text-stroke:0.12px #f3f3f3;transform:translate(0.90px,0.69px) rotate(0.03deg) scaleX(0.9157);">H</div>
<div class="x" style="left:11px;top:225px;font-size:14.2px;line-height:14.2px;color:#f3f3f3;font-family:'Liberation Sans',sans-serif;-webkit-text-stroke:0.12px #f3f3f3;transform:translate(0.80px,0.28px) rotate(0.03deg) scaleX(1.0392);">1</div>
<div class="x" style="left:11px;top:245px;font-size:14.2px;line-height:14.2px;color:#f3f3f3;font-family:'Liberation Sans',sans-serif;-webkit-text-stroke:0.12px #f3f3f3;transform:translate(0.80px,0.43px) rotate(0.03deg) scaleX(1.0392);">2</div>
<div class="x" style="left:11px;top:265px;font-size:14.2px;line-height:14.2px;color:#f3f3f3;font-family:'Liberation Sans',sans-serif;-webkit-text-stroke:0.12px #f3f3f3;transform:translate(0.80px,0.68px) rotate(0.03deg) scaleX(1.0392);">3</div>
<div class="x" style="left:11px;top:286px;font-size:14.2px;line-height:14.2px;color:#f3f3f3;font-family:'Liberation Sans',sans-serif;-webkit-text-stroke:0.12px #f3f3f3;transform:translate(0.80px,0.03px) rotate(0.03deg) scaleX(1.0392);">4</div>
<div class="x" style="left:11px;top:306px;font-size:14.2px;line-height:14.2px;color:#f3f3f3;font-family:'Liberation Sans',sans-serif;-webkit-text-stroke:0.12px #f3f3f3;transform:translate(0.80px,0.48px) rotate(0.03deg) scaleX(1.0392);">5</div>
<div class="x" style="left:11px;top:326px;font-size:14.2px;line-height:14.2px;color:#f3f3f3;font-family:'Liberation Sans',sans-serif;-webkit-text-stroke:0.12px #f3f3f3;transform:translate(0.80px,0.73px) rotate(0.03deg) scaleX(1.0392);">6</div>
<div class="x" style="left:11px;top:346px;font-size:14.2px;line-height:14.2px;color:#f3f3f3;font-family:'Liberation Sans',sans-serif;-webkit-text-stroke:0.12px #f3f3f3;transform:translate(0.80px,0.93px) rotate(0.03deg) scaleX(1.0392);">7</div>
<div class="x" style="left:11px;top:366px;font-size:14.2px;line-height:14.2px;color:#f3f3f3;font-family:'Liberation Sans',sans-serif;-webkit-text-stroke:0.12px #f3f3f3;transform:translate(0.80px,0.63px) rotate(0.03deg) scaleX(1.0392);">8</div>
<div class="x" style="left:11px;top:386px;font-size:14.2px;line-height:14.2px;color:#f3f3f3;font-family:'Liberation Sans',sans-serif;-webkit-text-stroke:0.12px #f3f3f3;transform:translate(0.80px,0.78px) rotate(0.03deg) scaleX(1.0392);">9</div>
<div class="x" style="left:8px;top:406px;font-size:14.2px;line-height:14.2px;color:#f3f3f3;font-family:'Liberation Sans',sans-serif;-webkit-text-stroke:0.12px #f3f3f3;transform:translate(0.00px,0.98px) rotate(0.03deg) scaleX(1.0012);">10</div>
<div class="x" style="left:8px;top:427px;font-size:14.2px;line-height:14.2px;color:#f3f3f3;font-family:'Liberation Sans',sans-serif;-webkit-text-stroke:0.12px #f3f3f3;transform:translate(0.00px,0.18px) rotate(0.03deg) scaleX(1.0723);">11</div>
<div class="x" style="left:8px;top:447px;font-size:14.2px;line-height:14.2px;color:#f3f3f3;font-family:'Liberation Sans',sans-serif;-webkit-text-stroke:0.12px #f3f3f3;transform:translate(0.00px,0.38px) rotate(0.03deg) scaleX(1.0012);">12</div>
<div class="x" style="left:8px;top:467px;font-size:14.2px;line-height:14.2px;color:#f3f3f3;font-family:'Liberation Sans',sans-serif;-webkit-text-stroke:0.12px #f3f3f3;clip-path:inset(0 0 8.6px 0);transform:translate(0.00px,0.58px) rotate(0.03deg) scaleX(1.0012);">13</div>
<div class="x" style="left:177px;top:225px;font-size:14px;line-height:14px;color:#10140f;font-family:'Liberation Sans',sans-serif;font-weight:bold;-webkit-text-stroke:0.2px #10140f;transform:translate(0.40px,0.35px) rotate(0.03deg) scaleX(0.9043);">CONCATENATE FUNCTION</div>
<div class="x" style="left:101px;top:245px;font-size:14px;line-height:14px;color:#10140f;font-family:'Liberation Sans',sans-serif;font-weight:bold;-webkit-text-stroke:0.2px #10140f;transform:translate(0.80px,0.20px) rotate(0.03deg) scaleX(0.9179);">Text 1</div>
<div class="x" style="left:202px;top:245px;font-size:14px;line-height:14px;color:#10140f;font-family:'Liberation Sans',sans-serif;font-weight:bold;-webkit-text-stroke:0.2px #10140f;transform:translate(0.40px,0.20px) rotate(0.03deg) scaleX(0.9281);">Text 2</div>
<div class="x" style="left:256px;top:245px;font-size:14px;line-height:14px;color:#10140f;font-family:'Liberation Sans',sans-serif;font-weight:bold;-webkit-text-stroke:0.2px #10140f;transform:translate(0.00px,0.20px) rotate(0.03deg) scaleX(0.8772);">CONCATENATED TEXT</div>
<div class="x" style="left:101px;top:265px;font-size:14.5px;line-height:14.5px;color:#10140f;font-family:'Liberation Sans',sans-serif;transform:translate(0.60px,0.33px) rotate(0.03deg) scaleX(0.9614);">Chapter</div>
<div class="x" style="left:235px;top:265px;font-size:14.5px;line-height:14.5px;color:#10140f;font-family:'Liberation Sans',sans-serif;transform:translate(0.00px,0.33px) rotate(0.03deg) scaleX(0.9727);">24</div>
<div class="x" style="left:101px;top:285px;font-size:14.5px;line-height:14.5px;color:#10140f;font-family:'Liberation Sans',sans-serif;transform:translate(0.60px,0.68px) rotate(0.03deg) scaleX(0.9614);">Chapter</div>
<div class="x" style="left:235px;top:285px;font-size:14.5px;line-height:14.5px;color:#10140f;font-family:'Liberation Sans',sans-serif;transform:translate(0.00px,0.68px) rotate(0.03deg) scaleX(0.9727);">24</div>
<div class="x" style="left:101px;top:306px;font-size:14.5px;line-height:14.5px;color:#10140f;font-family:'Liberation Sans',sans-serif;transform:translate(0.60px,0.13px) rotate(0.03deg) scaleX(0.9614);">Chapter</div>
<div class="x" style="left:235px;top:306px;font-size:14.5px;line-height:14.5px;color:#10140f;font-family:'Liberation Sans',sans-serif;transform:translate(0.00px,0.13px) rotate(0.03deg) scaleX(0.9727);">24</div>
<div class="x" style="left:101px;top:326px;font-size:14.5px;line-height:14.5px;color:#10140f;font-family:'Liberation Sans',sans-serif;transform:translate(0.60px,0.38px) rotate(0.03deg) scaleX(0.9614);">Chapter</div>
<div class="x" style="left:235px;top:326px;font-size:14.5px;line-height:14.5px;color:#10140f;font-family:'Liberation Sans',sans-serif;transform:translate(0.00px,0.38px) rotate(0.03deg) scaleX(0.9727);">24</div>
<div class="x" style="left:101px;top:346px;font-size:14.5px;line-height:14.5px;color:#10140f;font-family:'Liberation Sans',sans-serif;transform:translate(0.60px,0.58px) rotate(0.03deg) scaleX(0.9614);">Chapter</div>
<div class="x" style="left:235px;top:346px;font-size:14.5px;line-height:14.5px;color:#10140f;font-family:'Liberation Sans',sans-serif;transform:translate(0.00px,0.58px) rotate(0.03deg) scaleX(0.9727);">24</div>
<div class="x" style="left:101px;top:366px;font-size:14.5px;line-height:14.5px;color:#10140f;font-family:'Liberation Sans',sans-serif;transform:translate(0.60px,0.28px) rotate(0.03deg) scaleX(0.9614);">Chapter</div>
<div class="x" style="left:235px;top:366px;font-size:14.5px;line-height:14.5px;color:#10140f;font-family:'Liberation Sans',sans-serif;transform:translate(0.00px,0.28px) rotate(0.03deg) scaleX(0.9727);">24</div>
<div class="x" style="left:101px;top:386px;font-size:14.5px;line-height:14.5px;color:#10140f;font-family:'Liberation Sans',sans-serif;transform:translate(0.60px,0.43px) rotate(0.03deg) scaleX(0.9614);">Chapter</div>
<div class="x" style="left:235px;top:386px;font-size:14.5px;line-height:14.5px;color:#10140f;font-family:'Liberation Sans',sans-serif;transform:translate(0.00px,0.43px) rotate(0.03deg) scaleX(0.9727);">24</div>
<div class="x" style="left:255px;top:265px;font-size:14.5px;line-height:14.5px;color:#10140f;font-family:'Liberation Sans',sans-serif;transform:translate(0.80px,0.33px) rotate(0.03deg) scaleX(0.9480);">Chapter24</div>
<div class="x" style="left:255px;top:285px;font-size:14.5px;line-height:14.5px;color:#10140f;font-family:'Liberation Sans',sans-serif;transform:translate(0.80px,0.68px) rotate(0.03deg) scaleX(0.9436);">Chapter 24</div>
<div class="x" style="left:255px;top:306px;font-size:14.5px;line-height:14.5px;color:#10140f;font-family:'Liberation Sans',sans-serif;transform:translate(0.80px,0.13px) rotate(0.03deg) scaleX(0.9495);">Chapter, 24</div>
<div class="x" style="left:99px;top:478px;font-size:11.6px;line-height:11.6px;color:#1b1b1b;font-family:'Liberation Sans',sans-serif;font-weight:bold;transform:translate(0.00px,0.98px) rotate(0.03deg) scaleX(0.8887);">Sheet1</div>
<div class="x" style="left:11px;top:504px;font-size:9.2px;line-height:9.2px;color:#f0f0f0;font-family:'Liberation Sans',sans-serif;-webkit-text-stroke:0.12px #f0f0f0;transform:translate(0.30px,0.41px) rotate(0.03deg) scaleX(0.8809);">Ready</div>
<div class="x" style="left:90px;top:504px;font-size:9.2px;line-height:9.2px;color:#f0f0f0;font-family:'Liberation Sans',sans-serif;-webkit-text-stroke:0.12px #f0f0f0;transform:translate(0.00px,0.41px) rotate(0.03deg) scaleX(0.9144);">Accessibility: Good to go</div>
<div class="x" style="left:685px;top:504px;font-size:9.2px;line-height:9.2px;color:#f0f0f0;font-family:'Liberation Sans',sans-serif;-webkit-text-stroke:0.12px #f0f0f0;transform:translate(0.00px,0.21px) rotate(0.03deg) scaleX(0.9234);">100%</div></div>
</div></body></html>
